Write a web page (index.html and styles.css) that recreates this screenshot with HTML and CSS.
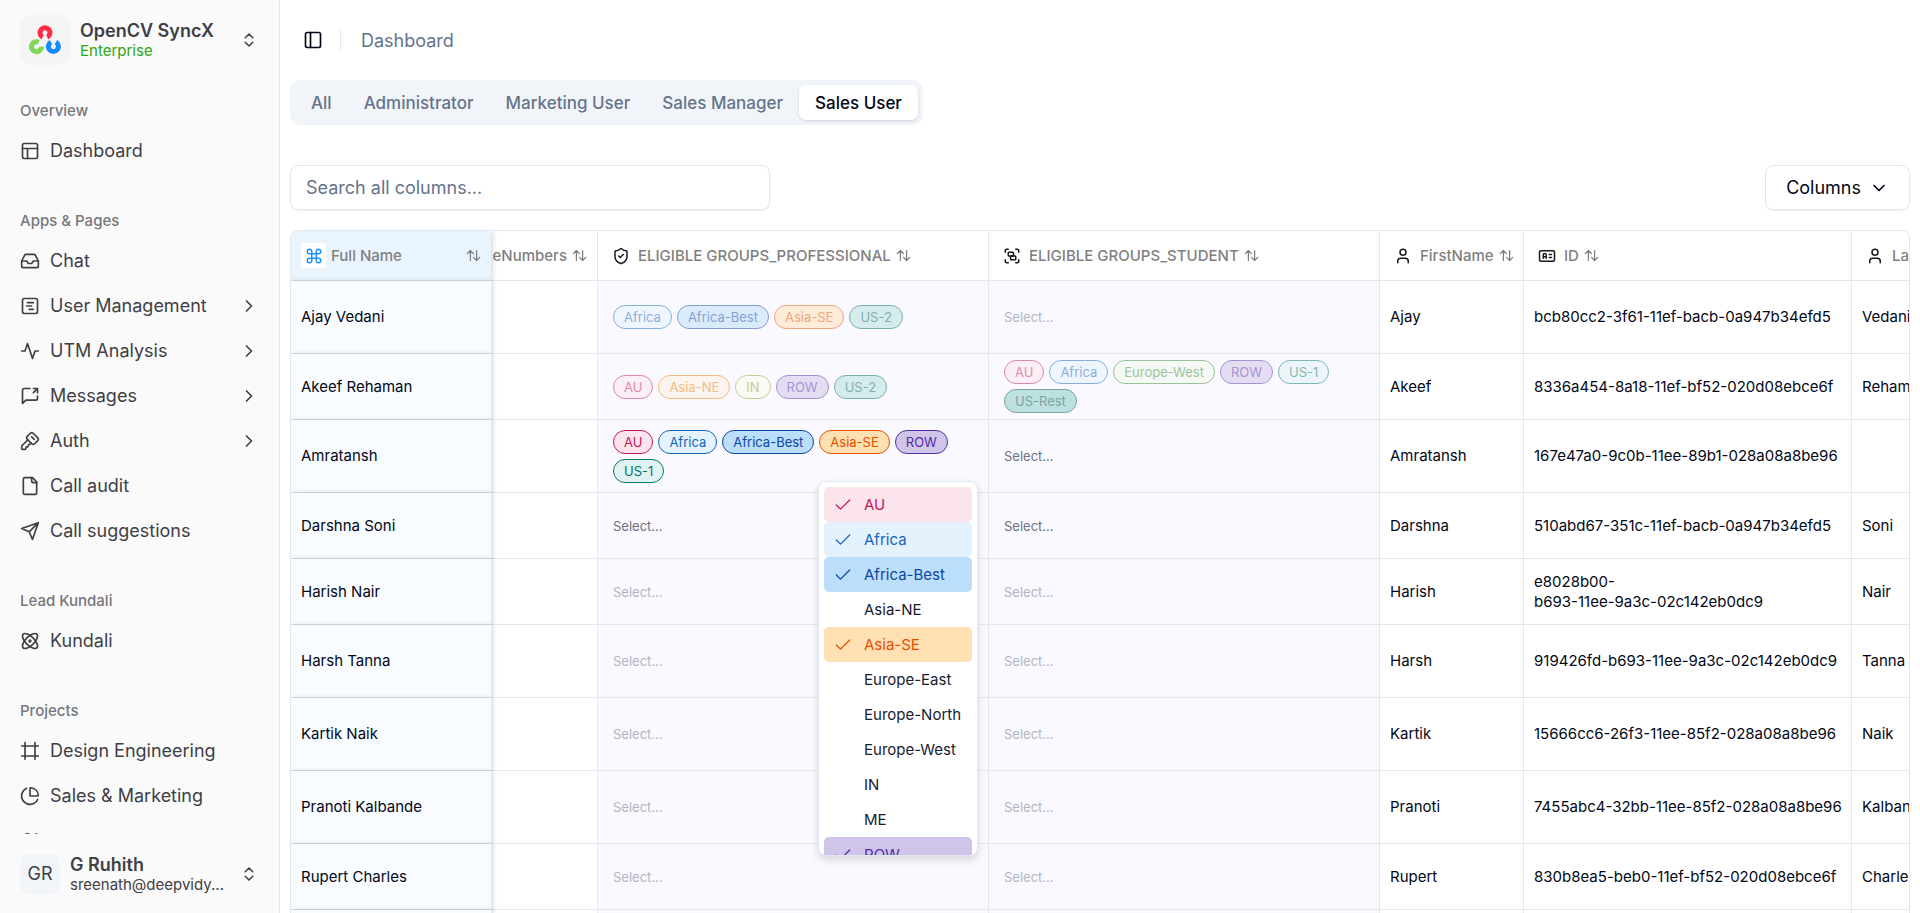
FILE: index.html
```html
<!DOCTYPE html>
<html lang="en">
<head>
<meta charset="utf-8">
<title>Dashboard</title>
<link rel="stylesheet" href="styles.css">
</head>
<body>
<svg class="sprite" aria-hidden="true">
  <symbol id="updown" viewBox="0 0 24 24"><path d="m7 15 5 5 5-5M7 9l5-5 5 5"/></symbol>
  <symbol id="right" viewBox="0 0 24 24"><path d="m9 18 6-6-6-6"/></symbol>
  <symbol id="down" viewBox="0 0 24 24"><path d="m6 9 6 6 6-6"/></symbol>
  <symbol id="check" viewBox="0 0 24 24"><path d="M20 6 9 17l-5-5"/></symbol>
  <symbol id="sort" viewBox="0 0 24 24"><path d="m2 9 5-5 5 5M7 4v16M22 15l-5 5-5-5M17 20V4"/></symbol>
  <symbol id="panel" viewBox="0 0 24 24"><rect x="3" y="3" width="18" height="18" rx="2"/><path d="M9 3v18"/></symbol>
  <symbol id="layout" viewBox="0 0 24 24"><rect x="3" y="3" width="18" height="18" rx="2"/><path d="M3 9h18M9 21V9"/></symbol>
  <symbol id="inbox" viewBox="0 0 24 24"><path d="M22 12h-6l-2 3h-4l-2-3H2"/><path d="M5.45 5.11 2 12v6a2 2 0 0 0 2 2h16a2 2 0 0 0 2-2v-6l-3.45-6.89A2 2 0 0 0 16.76 4H7.24a2 2 0 0 0-1.79 1.11z"/></symbol>
  <symbol id="gantt" viewBox="0 0 24 24"><rect x="3" y="3" width="18" height="18" rx="2"/><path d="M9 8h7M8 12h6M11 16h5"/></symbol>
  <symbol id="activity" viewBox="0 0 24 24"><path d="M22 12h-4l-3 9L9 3l-3 9H2"/></symbol>
  <symbol id="share" viewBox="0 0 24 24"><path d="M21 12v3a2 2 0 0 1-2 2H7l-4 4V5a2 2 0 0 1 2-2h7M16 3h5v5M16 8l5-5"/></symbol>
  <symbol id="key" viewBox="0 0 24 24"><path d="M12.400 2.700a2.500 2.500 0 0 1 3.400 0l5.500 5.500a2.500 2.500 0 0 1 0 3.400l-3.700 3.700a2.500 2.500 0 0 1-3.400 0L8.700 9.800a2.500 2.500 0 0 1 0-3.400z"/><path d="m14 7 3 3"/><path d="m9.400 10.600-6.814 6.814A2 2 0 0 0 2 18.828V21a1 1 0 0 0 1 1h3a1 1 0 0 0 1-1v-1a1 1 0 0 1 1-1h1a1 1 0 0 0 1-1v-1a1 1 0 0 1 1-1h.172a2 2 0 0 0 1.414-.586l.814-.814"/></symbol>
  <symbol id="file" viewBox="0 0 24 24"><path d="M15 2H6a2 2 0 0 0-2 2v16a2 2 0 0 0 2 2h12a2 2 0 0 0 2-2V7Z"/><path d="M14 2v4a2 2 0 0 0 2 2h4"/></symbol>
  <symbol id="send" viewBox="0 0 24 24"><path d="m22 2-7 20-4-9-9-4ZM22 2 11 13"/></symbol>
  <symbol id="atom" viewBox="0 0 24 24"><circle cx="12" cy="12" r="1"/><path d="M20.2 20.2c2.04-2.03.02-7.36-4.5-11.9-4.54-4.52-9.87-6.54-11.9-4.5-2.04 2.03-.02 7.36 4.5 11.9 4.54 4.52 9.87 6.54 11.9 4.5Z"/><path d="M15.7 15.7c4.52-4.54 6.54-9.87 4.5-11.9-2.03-2.04-7.36-.02-11.9 4.5-4.52 4.54-6.54 9.87-4.5 11.9 2.03 2.04 7.36.02 11.9-4.5Z"/></symbol>
  <symbol id="frame" viewBox="0 0 24 24"><path d="M22 6H2M22 18H2M6 2v20M18 2v20"/></symbol>
  <symbol id="pie" viewBox="0 0 24 24"><path d="M21 12c.552 0 1.005-.449.95-.998a10 10 0 0 0-8.953-8.951c-.55-.055-.998.398-.998.95v8a1 1 0 0 0 1 1z"/><path d="M21.21 15.89A10 10 0 1 1 8 2.83"/></symbol>
  <symbol id="map" viewBox="0 0 24 24"><path d="M14.106 5.553a2 2 0 0 0 1.788 0l3.659-1.830A1 1 0 0 1 21 4.619v12.764a1 1 0 0 1-.553.894l-4.553 2.277a2 2 0 0 1-1.788 0l-4.212-2.106a2 2 0 0 0-1.788 0l-3.659 1.830A1 1 0 0 1 3 19.381V6.618a1 1 0 0 1 .553-.894l4.553-2.277a2 2 0 0 1 1.788 0zM15 5.764v15M9 3.236v15"/></symbol>
  <symbol id="command" viewBox="0 0 24 24"><path d="M15 6v12a3 3 0 1 0 3-3H6a3 3 0 1 0 3 3V6a3 3 0 1 0-3 3h12a3 3 0 1 0-3-3"/></symbol>
  <symbol id="shield" viewBox="0 0 24 24"><path d="M20 13c0 5-3.500 7.500-7.660 8.950a1 1 0 0 1-.67-.01C7.500 20.500 4 18 4 13V6a1 1 0 0 1 1-1c2 0 4.500-1.200 6.240-2.720a1.170 1.170 0 0 1 1.520 0C14.510 3.810 17 5 19 5a1 1 0 0 1 1 1z"/><path d="m9 12 2 2 4-4"/></symbol>
  <symbol id="group" viewBox="0 0 24 24"><path d="M3 7V5c0-1.100.9-2 2-2h2M17 3h2c1.100 0 2 .9 2 2v2M21 17v2c0 1.100-.9 2-2 2h-2M7 21H5c-1.100 0-2-.9-2-2v-2"/><rect width="7" height="5" x="7" y="7" rx="1"/><rect width="7" height="5" x="10" y="12" rx="1"/></symbol>
  <symbol id="user" viewBox="0 0 24 24"><circle cx="12" cy="7" r="4"/><path d="M19 21v-2a4 4 0 0 0-4-4H9a4 4 0 0 0-4 4v2"/></symbol>
  <symbol id="idcard" viewBox="0 0 24 24"><rect x="2" y="5" width="20" height="14" rx="2"/><path d="M7 15v-4.500a1.500 1.500 0 0 1 4 0V15M7 13h4M15 10h3M15 14h3"/></symbol>
</svg>

<div class="app">
  <aside class="sidebar">
    <button class="switcher switcher-top" type="button">
      <span class="logo">
        <svg viewBox="0 0 32 32" fill="none" stroke-width="5">
          <path stroke="#ff2a44" d="M13.700 13.200A5 5 0 1 1 18.300 13.200"/>
          <path stroke="#84d65a" d="M9.700 18.200A5 5 0 1 0 12.500 22.600"/>
          <path stroke="#128dff" d="M21.900 18.200A5 5 0 1 0 26.900 18.200"/>
        </svg>
      </span>
      <span class="who"><strong>OpenCV SyncX</strong><span class="plan">Enterprise</span></span>
      <svg class="icon small"><use href="#updown"/></svg>
    </button>

    <nav class="nav">
      <section class="group">
        <h2>Overview</h2>
        <a href="#"><svg class="icon"><use href="#layout"/></svg><span>Dashboard</span></a>
      </section>
      <section class="group">
        <h2>Apps &amp; Pages</h2>
        <a href="#"><svg class="icon"><use href="#inbox"/></svg><span>Chat</span></a>
        <a href="#"><svg class="icon"><use href="#gantt"/></svg><span>User Management</span><svg class="icon"><use href="#right"/></svg></a>
        <a href="#"><svg class="icon"><use href="#activity"/></svg><span>UTM Analysis</span><svg class="icon"><use href="#right"/></svg></a>
        <a href="#"><svg class="icon"><use href="#share"/></svg><span>Messages</span><svg class="icon"><use href="#right"/></svg></a>
        <a href="#"><svg class="icon"><use href="#key"/></svg><span>Auth</span><svg class="icon"><use href="#right"/></svg></a>
        <a href="#"><svg class="icon"><use href="#file"/></svg><span>Call audit</span></a>
        <a href="#"><svg class="icon"><use href="#send"/></svg><span>Call suggestions</span></a>
      </section>
      <section class="group">
        <h2>Lead Kundali</h2>
        <a href="#"><svg class="icon"><use href="#atom"/></svg><span>Kundali</span></a>
      </section>
      <section class="group">
        <h2>Projects</h2>
        <a href="#"><svg class="icon"><use href="#frame"/></svg><span>Design Engineering</span></a>
        <a href="#"><svg class="icon"><use href="#pie"/></svg><span>Sales &amp; Marketing</span></a>
        <a href="#" aria-label="More projects"><svg class="icon"><use href="#map"/></svg></a>
      </section>
    </nav>

    <button class="switcher switcher-bottom" type="button">
      <span class="avatar">GR</span>
      <span class="who"><strong>G Ruhith</strong><span class="mail">sreenath@deepvidy...</span></span>
      <svg class="icon small"><use href="#updown"/></svg>
    </button>
  </aside>

  <main class="main">
    <header class="topbar">
      <button class="toggle" type="button" aria-label="Toggle sidebar"><svg class="icon"><use href="#panel"/></svg></button>
      <span class="divider"></span>
      <a class="crumb" href="#">Dashboard</a>
    </header>

    <div class="tabs" role="tablist">
      <button type="button" role="tab">All</button>
      <button type="button" role="tab">Administrator</button>
      <button type="button" role="tab">Marketing User</button>
      <button type="button" role="tab">Sales Manager</button>
      <button type="button" role="tab" class="active" aria-selected="true">Sales User</button>
    </div>

    <div class="toolbar">
      <input class="search" type="text" placeholder="Search all columns..." aria-label="Search all columns">
      <button class="columns" type="button">Columns <svg class="icon"><use href="#down"/></svg></button>
    </div>

    <div class="table-wrap">
      <table>
        <colgroup><col class="c-name"><col class="c-phone"><col class="c-groups"><col class="c-groups"><col class="c-first"><col class="c-id"><col class="c-last"></colgroup>
        <thead>
          <tr>
            <th class="pin"><div class="head"><span class="badge blue"><svg class="icon"><use href="#command"/></svg></span><span class="grow">Full Name</span><svg class="icon sort"><use href="#sort"/></svg></div></th>
            <th><div class="head end"><span>eNumbers</span><svg class="icon sort"><use href="#sort"/></svg></div></th>
            <th><div class="head"><span class="badge"><svg class="icon"><use href="#shield"/></svg></span><span>ELIGIBLE GROUPS_PROFESSIONAL</span><svg class="icon sort"><use href="#sort"/></svg></div></th>
            <th><div class="head"><span class="badge"><svg class="icon"><use href="#group"/></svg></span><span>ELIGIBLE GROUPS_STUDENT</span><svg class="icon sort"><use href="#sort"/></svg></div></th>
            <th><div class="head"><span class="badge"><svg class="icon"><use href="#user"/></svg></span><span>FirstName</span><svg class="icon sort"><use href="#sort"/></svg></div></th>
            <th><div class="head"><span class="badge"><svg class="icon"><use href="#idcard"/></svg></span><span>ID</span><svg class="icon sort"><use href="#sort"/></svg></div></th>
            <th><div class="head"><span class="badge"><svg class="icon"><use href="#user"/></svg></span><span>LastName</span></div></th>
          </tr>
        </thead>
        <tbody>
          <tr class="tall">
            <td class="pin">Ajay Vedani</td><td></td>
            <td class="tags off"><div><span class="tag africa">Africa</span><span class="tag africa-best">Africa-Best</span><span class="tag asia-se">Asia-SE</span><span class="tag us2">US-2</span></div></td>
            <td class="tags off"><div>Select...</div></td>
            <td>Ajay</td><td>bcb80cc2-3f61-11ef-bacb-0a947b34efd5</td><td>Vedani</td>
          </tr>
          <tr>
            <td class="pin">Akeef Rehaman</td><td></td>
            <td class="tags off"><div><span class="tag au">AU</span><span class="tag asia-ne">Asia-NE</span><span class="tag in">IN</span><span class="tag row">ROW</span><span class="tag us2">US-2</span></div></td>
            <td class="tags off"><div><span class="tag au">AU</span><span class="tag africa">Africa</span><span class="tag europe-west">Europe-West</span><span class="tag row">ROW</span><span class="tag us1">US-1</span><span class="tag us-rest">US-Rest</span></div></td>
            <td>Akeef</td><td>8336a454-8a18-11ef-bf52-020d08ebce6f</td><td>Rehaman</td>
          </tr>
          <tr class="tall">
            <td class="pin">Amratansh</td><td></td>
            <td class="tags open"><div><span class="tag au">AU</span><span class="tag africa">Africa</span><span class="tag africa-best">Africa-Best</span><span class="tag asia-se">Asia-SE</span><span class="tag row">ROW</span><span class="tag us1">US-1</span></div>
              <ul class="menu" role="listbox" aria-label="Groups">
                <li class="au" role="option" aria-selected="true"><svg class="icon"><use href="#check"/></svg>AU</li>
                <li class="africa" role="option" aria-selected="true"><svg class="icon"><use href="#check"/></svg>Africa</li>
                <li class="africa-best" role="option" aria-selected="true"><svg class="icon"><use href="#check"/></svg>Africa-Best</li>
                <li role="option">Asia-NE</li>
                <li class="asia-se" role="option" aria-selected="true"><svg class="icon"><use href="#check"/></svg>Asia-SE</li>
                <li role="option">Europe-East</li>
                <li role="option">Europe-North</li>
                <li role="option">Europe-West</li>
                <li role="option">IN</li>
                <li role="option">ME</li>
                <li class="row" role="option" aria-selected="true"><svg class="icon"><use href="#check"/></svg>ROW</li>
              </ul>
            </td>
            <td class="tags"><div>Select...</div></td>
            <td>Amratansh</td><td>167e47a0-9c0b-11ee-89b1-028a08a8be96</td><td></td>
          </tr>
          <tr>
            <td class="pin">Darshna Soni</td><td></td><td class="tags"><div>Select...</div></td><td class="tags"><div>Select...</div></td>
            <td>Darshna</td><td>510abd67-351c-11ef-bacb-0a947b34efd5</td><td>Soni</td>
          </tr>
          <tr>
            <td class="pin">Harish Nair</td><td></td><td class="tags off"><div>Select...</div></td><td class="tags off"><div>Select...</div></td>
            <td>Harish</td><td>e8028b00-<br>b693-11ee-9a3c-02c142eb0dc9</td><td>Nair</td>
          </tr>
          <tr class="tall">
            <td class="pin">Harsh Tanna</td><td></td><td class="tags off"><div>Select...</div></td><td class="tags off"><div>Select...</div></td>
            <td>Harsh</td><td>919426fd-b693-11ee-9a3c-02c142eb0dc9</td><td>Tanna</td>
          </tr>
          <tr class="tall">
            <td class="pin">Kartik Naik</td><td></td><td class="tags off"><div>Select...</div></td><td class="tags off"><div>Select...</div></td>
            <td>Kartik</td><td>15666cc6-26f3-11ee-85f2-028a08a8be96</td><td>Naik</td>
          </tr>
          <tr class="tall">
            <td class="pin">Pranoti Kalbande</td><td></td><td class="tags off"><div>Select...</div></td><td class="tags off"><div>Select...</div></td>
            <td>Pranoti</td><td>7455abc4-32bb-11ee-85f2-028a08a8be96</td><td>Kalbande</td>
          </tr>
          <tr>
            <td class="pin">Rupert Charles</td><td></td><td class="tags off"><div>Select...</div></td><td class="tags off"><div>Select...</div></td>
            <td>Rupert</td><td>830b8ea5-beb0-11ef-bf52-020d08ebce6f</td><td>Charles</td>
          </tr>
          <tr>
            <td class="pin"></td><td></td><td class="tags"></td><td class="tags"></td><td></td><td></td><td></td>
          </tr>
        </tbody>
      </table>
    </div>
  </main>
</div>
</body>
</html>
```
FILE: styles.css
```css
* { box-sizing: border-box; }

body {
  margin: 0;
  font-family: Inter, "Liberation Sans", sans-serif;
  font-size: 15px;
  line-height: 20px;
  color: #020817;
  background: #fff;
}

button, input { font: inherit; color: inherit; }
button { cursor: pointer; background: none; border: 0; padding: 0; }
a { color: inherit; text-decoration: none; }

.sprite { display: none; }

.icon {
  width: 20px;
  height: 20px;
  flex: none;
  fill: none;
  stroke: currentColor;
  stroke-width: 2;
  stroke-linecap: round;
  stroke-linejoin: round;
}
.icon.small { width: 18px; height: 18px; margin-right: 1px; }

.app { display: flex; height: 100vh; overflow: hidden; }

/* Sidebar */
.sidebar {
  flex: none;
  width: 280px;
  display: flex;
  flex-direction: column;
  color: #3f3f46;
  background: #fafafa;
  border-right: 1px solid #e2e4ee;
}
.switcher { display: flex; align-items: center; text-align: left; gap: 10px; }
.switcher-top { padding: 15px 20px 16px; }
.switcher-bottom { height: 79px; padding: 0 20px; }
.switcher .who { flex: 1; display: flex; flex-direction: column; min-width: 0; }
.switcher strong { font-size: 18px; font-weight: 600; line-height: 21px; }
.plan { color: #2ea80f; line-height: 19px; }
.mail { line-height: 19px; }
.logo {
  width: 50px;
  height: 50px;
  display: grid;
  place-items: center;
  border-radius: 10px;
  background: #f4f4f5;
}
.logo svg { width: 32px; height: 32px; }
.avatar {
  width: 40px;
  height: 40px;
  display: grid;
  place-items: center;
  border-radius: 10px;
  font-size: 18px;
  background: #f1f5f9;
}

.nav { flex: 1; min-height: 0; overflow: hidden; }
.group { display: flex; flex-direction: column; gap: 5px; padding: 10px 20px 20px; }
.group h2 {
  margin: 0 0 -5px;
  font-size: 15px;
  font-weight: 500;
  line-height: 40px;
  color: #76767b;
}
.group a { display: flex; align-items: center; gap: 10px; height: 40px; font-size: 18px; }
.group a span { flex: 1; }

/* Main */
.main { flex: 1; min-width: 0; padding: 0 10px; }
.topbar { display: flex; align-items: center; height: 80px; padding-left: 13px; }
.toggle { display: flex; }
.divider { width: 1px; height: 20px; margin: 0 20px 0 17px; background: #e2e8f0; }
.crumb { font-size: 18px; line-height: 25px; color: #64748b; }

.tabs {
  display: inline-flex;
  padding: 5px;
  border-radius: 10px;
  background: #f1f5f9;
}
.tabs button {
  height: 35px;
  padding: 0 16px;
  border-radius: 7px;
  font-size: 17px;
  font-weight: 500;
  color: #64748b;
}
.tabs .active { color: #020817; background: #fff; box-shadow: 0 1px 3px rgba(0, 0, 0, .14); }

.toolbar { display: flex; justify-content: space-between; padding: 40px 0 20px; }
.search, .columns {
  height: 45px;
  border: 1px solid #e2e8f0;
  border-radius: 8px;
  box-shadow: 0 1px 2px rgba(0, 0, 0, .06);
}
.search { width: 480px; padding: 0 15px; font-size: 18px; background: #fff; }
.search::placeholder { color: #64748b; opacity: 1; }
.columns { display: flex; align-items: center; gap: 8px; padding: 0 20px; font-size: 18px; }

/* Table */
.table-wrap { overflow: hidden; border: 1px solid #e2e8f0; border-radius: 8px; }
table { width: 1761px; table-layout: fixed; border-collapse: separate; border-spacing: 0; }
.c-name { width: 200px; }
.c-phone { width: 107px; }
.c-groups { width: 391px; }
.c-first { width: 144px; }
.c-id { width: 328px; }
.c-last { width: 200px; }

th, td {
  padding: 0 10px;
  text-align: left;
  vertical-align: middle;
  border-right: 1px solid #e5e7eb;
  border-bottom: 1px solid #e5e7eb;
}
th { height: 50px; font-weight: 500; color: #7f7f7f; }
td { height: 66px; white-space: nowrap; }
.tall td { height: 73px; }

.pin {
  position: relative;
  background: #f8fcff;
  border-right: 0;
  border-bottom-color: #d9dde2;
  box-shadow: 2px 0 5px rgba(0, 0, 0, .15);
}
th.pin { background: #e9f4fe; }

.head { display: flex; align-items: center; gap: 5px; white-space: nowrap; }
.head.end { justify-content: flex-end; }
.head .grow { flex: 1; }
.badge { flex: none; width: 25px; height: 25px; display: grid; place-items: center; color: #18181b; background: #fff; }
.badge .icon { width: 18px; height: 18px; }
.badge.blue { color: #1e90ff; }
.sort { width: 15px; height: 15px; }

.tags { padding: 0 15px; font-size: 13px; color: #6b7280; background: #faf9ff; }
.tags > div { display: flex; flex-wrap: wrap; gap: 5px; }
.off > div { opacity: .5; }
.tag { padding: 0 10px; border: 1px solid; border-radius: 12px; line-height: 22px; }

.au { color: #c2185b; background: #fce4ec; }
.africa { color: #1565c0; background: #e3f2fd; }
.africa-best { color: #0d47a1; background: #bbdefb; }
.asia-ne { color: #f57c00; background: #fff3e0; }
.asia-se { color: #e65100; background: #ffe0b2; }
.europe-west { color: #388e3c; background: #f1f8e9; }
.in { color: #9e9d24; background: #f9fbe7; }
.row { color: #512da8; background: #d1c4e9; }
.us1 { color: #00796b; background: #e0f2f1; }
.us2 { color: #00695c; background: #b2dfdb; }
.us-rest { color: #004d40; background: #80cbc4; }

/* Group picker */
.open { position: relative; }
.menu {
  position: absolute;
  z-index: 2;
  top: 61px;
  right: 10px;
  width: 160px;
  height: 375px;
  margin: 0;
  padding: 5px;
  overflow: hidden;
  list-style: none;
  font-size: 15px;
  background: #fff;
  border: 1px solid #e2e8f0;
  border-radius: 8px;
  box-shadow: 0 4px 8px rgba(0, 0, 0, .14);
}
.menu li {
  position: relative;
  height: 35px;
  padding-left: 40px;
  line-height: 35px;
  border-radius: 5px;
}
.menu li:not([class]) { color: #18202f; }
.menu .icon { position: absolute; left: 9px; top: 8px; stroke-width: 1.5; }
```
